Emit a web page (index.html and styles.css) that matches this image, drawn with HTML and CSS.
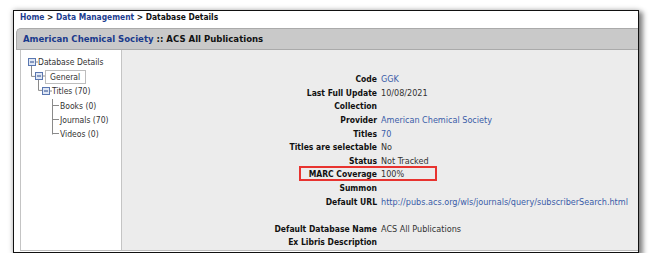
FILE: index.html
```html
<!DOCTYPE html>
<html lang="en">
<head>
  <meta charset="UTF-8">
  <title>Database Details</title>
  <link rel="stylesheet" href="styles.css">
</head>
<body>
  <div class="shot">
    <div class="crumbs">
      <a href="#">Home</a> &gt; <a href="#">Data Management</a> &gt; Database Details
    </div>

    <div class="titlebar">
      <a href="#">American Chemical Society</a> :: ACS All Publications
    </div>

    <div class="main">
      <!-- navigation tree -->
      <div class="tree">
        <div class="node">
          <svg class="tw" width="10" height="8" viewBox="0 0 10 8">
            <path class="branch" d="M3.5 7.5 V18.4 H7"/>
            <rect x="0.5" y="0.5" width="7" height="7"/>
            <path class="minus" d="M2 4 H6"/>
            <path class="branch" d="M7.5 4 H10"/>
          </svg>Database Details
        </div>
        <div class="node lvl1">
          <svg class="tw" width="10" height="8" viewBox="0 0 10 8">
            <path class="branch" d="M3.5 7.5 V18.4 H7"/>
            <rect x="0.5" y="0.5" width="7" height="7"/>
            <path class="minus" d="M2 4 H6"/>
            <path class="branch" d="M7.5 4 H10"/>
          </svg><span class="current">General</span>
        </div>
        <div class="node lvl2">
          <svg class="tw" width="10" height="8" viewBox="0 0 10 8">
            <rect x="0.5" y="0.5" width="7" height="7"/>
            <path class="minus" d="M2 4 H6"/>
            <path class="branch" d="M7.5 4 H10"/>
          </svg>Titles (70)
        </div>
        <div class="leaf">Books (0)</div>
        <div class="leaf">Journals (70)</div>
        <div class="leaf last">Videos (0)</div>
      </div>

      <!-- record fields -->
      <div class="details">
        <dl class="fields">
          <dt>Code</dt><dd><a href="#">GGK</a></dd>
          <dt>Last Full Update</dt><dd>10/08/2021</dd>
          <dt>Collection</dt><dd></dd>
          <dt>Provider</dt><dd><a href="#">American Chemical Society</a></dd>
          <dt>Titles</dt><dd><a href="#">70</a></dd>
          <dt>Titles are selectable</dt><dd>No</dd>
          <dt>Status</dt><dd>Not Tracked</dd>
          <dt>MARC Coverage</dt><dd>100%</dd>
          <dt>Summon</dt><dd></dd>
          <dt>Default URL</dt><dd><a href="#">http://pubs.acs.org/wls/journals/query/subscriberSearch.html</a></dd>
          <dt>&nbsp;</dt><dd></dd>
          <dt>Default Database Name</dt><dd>ACS All Publications</dd>
          <dt>Ex Libris Description</dt><dd></dd>
        </dl>
        <div class="highlight"></div>
      </div>
    </div>
  </div>
</body>
</html>
```

FILE: styles.css
```css
body {
  margin: 0;
  background-color: #fff;
  font-family: 'DejaVu Sans Condensed', 'DejaVu Sans', sans-serif;
  font-size: 8.5px;
  color: #111;
}

a {
  text-decoration: none;
}

.shot {
  box-sizing: border-box;
  width: 626px;
  height: 243px;
  margin: 10px 0 0 13px;
  border: 1px solid #111;
  background-color: #fff;
  display: flex;
  flex-direction: column;
  box-shadow: 3px 3px 5px 1px rgba(0, 0, 0, 0.45), 0 0 6px rgba(0, 0, 0, 0.2);
}

.crumbs {
  height: 18px;
  line-height: 12px;
  padding-left: 6px;
  font-weight: bold;
  font-size: 8.4px;
}

.crumbs a {
  color: #1c3d8f;
}

.titlebar {
  box-sizing: border-box;
  height: 22px;
  margin-left: 2px;
  padding-left: 6px;
  line-height: 20px;
  border: 1px solid #aaa;
  border-right: none;
  border-radius: 5px 0 0 0;
  background-color: #c9c9c9;
  font-weight: bold;
  font-size: 9.5px;
}

.titlebar a {
  color: #1a3a8c;
}

.main {
  flex: 1;
  display: flex;
  margin: 0 0 1px 6px;
  border-bottom: 1px solid #bdbdbd;
}

.tree {
  box-sizing: border-box;
  width: 102px;
  padding: 5px 0 0 7px;
  border-left: 1px solid #c4c4c4;
  border-right: 1px solid #c4c4c4;
  background-color: #fff;
  line-height: 14.4px;
  color: #333;
}

.node {
  white-space: nowrap;
}

.lvl1 {
  padding-left: 7px;
}

.lvl2 {
  padding-left: 14px;
}

.tw {
  overflow: visible;
  vertical-align: -0.5px;
}

.tw rect {
  fill: #dfe7f5;
  stroke: #5a77b0;
  stroke-width: 1;
}

.tw .minus {
  stroke: #2b4a8c;
  stroke-width: 1;
}

.tw .branch {
  fill: none;
  stroke: #8a8a8a;
  stroke-width: 1;
}

.current {
  display: inline-block;
  height: 14px;
  line-height: 13px;
  padding: 0 5px 0 4px;
  border: 1px solid #bdbdbd;
  box-sizing: border-box;
  vertical-align: middle;
}

.leaf {
  margin-left: 24px;
  padding-left: 0;
  border-left: 1px solid #8a8a8a;
  white-space: nowrap;
}

.leaf::before {
  content: "";
  display: inline-block;
  width: 6px;
  margin-right: 1px;
  border-top: 1px solid #8a8a8a;
  vertical-align: 3px;
}

.leaf.last {
  border-left: none;
  padding-left: 1px;
  background: linear-gradient(#8a8a8a, #8a8a8a) no-repeat 0 0 / 1px 50%;
}

.details {
  flex: 1;
  position: relative;
  padding-top: 23px;
  background-color: #ececec;
}

.fields {
  display: grid;
  grid-template-columns: 255px auto;
  column-gap: 4px;
  margin: 0;
  line-height: 13.6px;
}

.fields dt {
  text-align: right;
  font-weight: bold;
}

.fields dd {
  margin: 0;
  color: #333;
  font-size: 9px;
  white-space: nowrap;
}

.fields dd a {
  color: #3a5ca8;
}

/* annotation drawn over the MARC Coverage row */
.highlight {
  position: absolute;
  left: 177px;
  top: 116px;
  width: 138px;
  height: 15px;
  box-sizing: border-box;
  border: 2px solid #e8332f;
}
```
